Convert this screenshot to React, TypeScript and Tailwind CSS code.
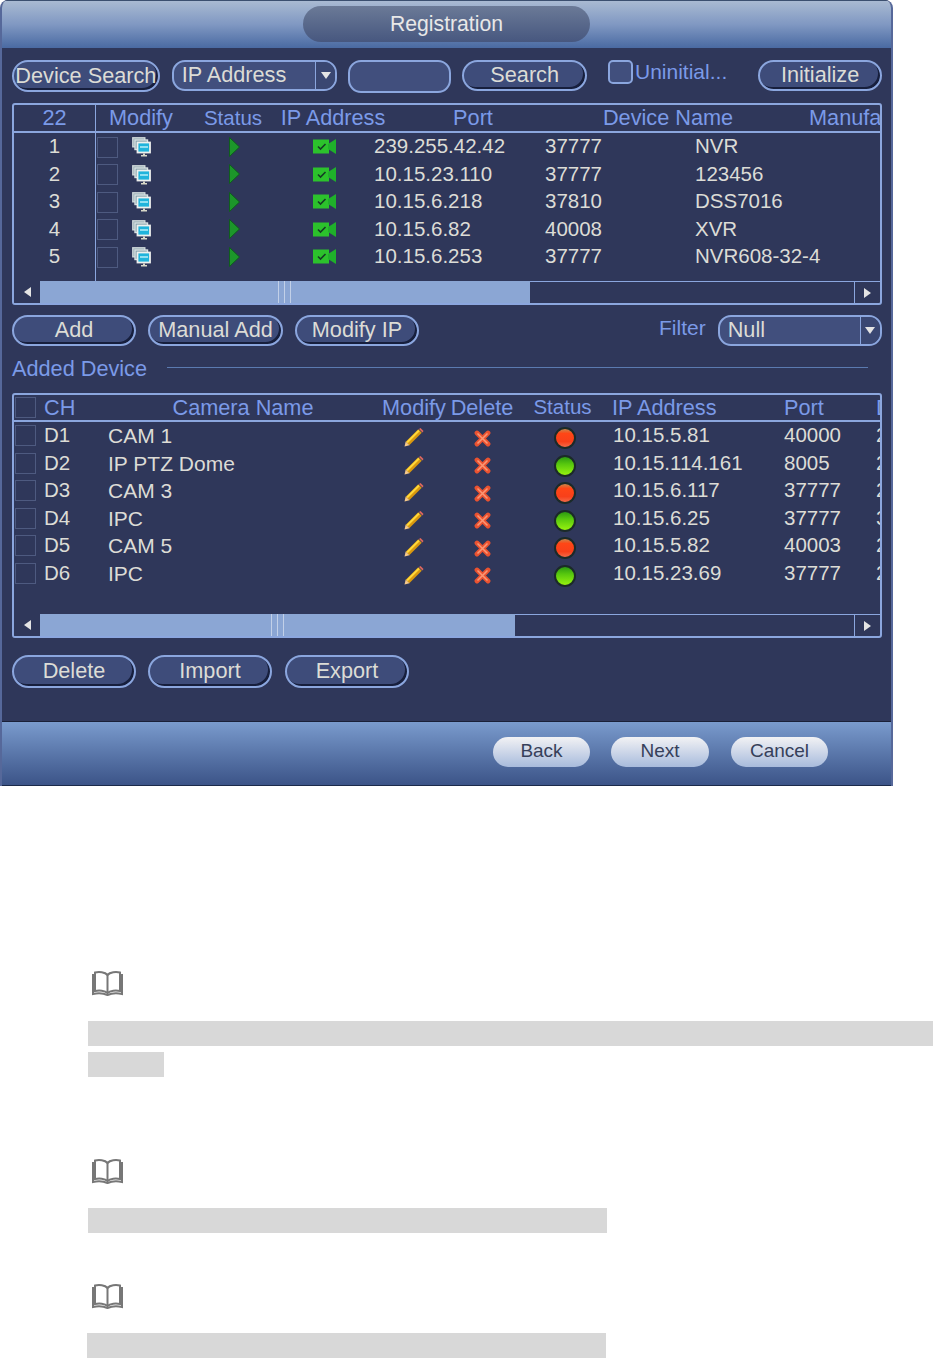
import React from 'react'

const found = [
  { n: '1', ip: '239.255.42.42', port: '37777', name: 'NVR' },
  { n: '2', ip: '10.15.23.110', port: '37777', name: '123456' },
  { n: '3', ip: '10.15.6.218', port: '37810', name: 'DSS7016' },
  { n: '4', ip: '10.15.6.82', port: '40008', name: 'XVR' },
  { n: '5', ip: '10.15.6.253', port: '37777', name: 'NVR608-32-4' },
]

const added = [
  { ch: 'D1', name: 'CAM 1', on: false, ip: '10.15.5.81', port: '40000', last: '2' },
  { ch: 'D2', name: 'IP PTZ Dome', on: true, ip: '10.15.114.161', port: '8005', last: '2' },
  { ch: 'D3', name: 'CAM 3', on: false, ip: '10.15.6.117', port: '37777', last: '2' },
  { ch: 'D4', name: 'IPC', on: true, ip: '10.15.6.25', port: '37777', last: '3' },
  { ch: 'D5', name: 'CAM 5', on: false, ip: '10.15.5.82', port: '40003', last: '2' },
  { ch: 'D6', name: 'IPC', on: true, ip: '10.15.23.69', port: '37777', last: '2' },
]

function Btn({ label, className }: { label: string; className: string }) {
  return (
    <div
      className={`flex items-center justify-center whitespace-nowrap rounded-full border-2 border-[#8ba6de] bg-[#3e4c7a] pb-[1px] text-[21.7px] leading-none text-[#dcdcd6] shadow-[inset_-2px_-2px_0_#171f3d] ${className}`}
    >
      {label}
    </div>
  )
}

function Caret() {
  return (
    <svg width="10" height="7" viewBox="0 0 10 7">
      <path d="M0 0h10L5 7z" fill="#e4e4e4" />
    </svg>
  )
}

function Select({ label, className }: { label: string; className: string }) {
  return (
    <div
      className={`flex items-center overflow-hidden rounded-[13px] border-2 border-[#8ba6de] bg-[#414f7d] text-[21.7px] leading-none text-[#dcdcd6] ${className}`}
    >
      <span className="flex-1 pb-[1px] pl-2">{label}</span>
      <span className="flex h-full w-[20px] items-center justify-center border-l border-[#8ba6de] bg-[#3a4772]">
        <Caret />
      </span>
    </div>
  )
}

function Check({ className = '' }: { className?: string }) {
  return <div className={`h-[21px] w-[21px] border border-[#4e5a80] ${className}`} />
}

function MonitorIcon() {
  return (
    <svg width="19" height="20" viewBox="0 0 19 20">
      <rect x="0.8" y="0.8" width="12" height="9" fill="#8fa6ae" stroke="#cfd8da" strokeWidth="1.400" />
      <rect x="3" y="3" width="12.500" height="9.500" fill="#7d9aa6" stroke="#d8e0e2" strokeWidth="1.400" />
      <rect x="5.500" y="5.500" width="12.500" height="10" fill="#20b4dc" stroke="#eef0ee" strokeWidth="1.800" />
      <rect x="8" y="9" width="8" height="2" fill="#8fe0f2" />
      <path d="M11 16.500h2v1.500h2v1.500h-6V18h2z" fill="#d8d8c8" />
    </svg>
  )
}

function PlayIcon() {
  return (
    <svg width="11" height="20" viewBox="0 0 11 20">
      <path d="M0.5 0.5L10.5 10L0.5 19.5z" fill="#1c962a" stroke="#0e5f1c" strokeWidth="1" />
    </svg>
  )
}

function CameraIcon() {
  return (
    <svg width="23" height="15" viewBox="0 0 23 15">
      <path d="M0 0.500h16v14H0z" fill="#2cc22c" />
      <path d="M15 5L23 0v15l-8-5z" fill="#1fb02a" />
      <path d="M5 7.500l2.500 2.500 5-5" fill="none" stroke="#143d24" strokeWidth="1.600" />
    </svg>
  )
}

function PencilIcon() {
  return (
    <svg width="20" height="20" viewBox="0 0 20 20">
      <path d="M3.500 16.500L16 4" stroke="#d9980f" strokeWidth="5" />
      <path d="M3 15.500L15 3.500" stroke="#ffd83a" strokeWidth="2" />
      <path d="M15 2l3.500 3.500 1-1.500L16.500 1z" fill="#e0685e" />
      <path d="M0.500 19.500l1.200-5 3.800 3.800z" fill="#f6c98a" />
    </svg>
  )
}

function CrossIcon() {
  return (
    <svg width="17" height="17" viewBox="0 0 17 17">
      <path d="M3 3l11 11M14 3L3 14" stroke="#ea5230" strokeWidth="4.800" strokeLinecap="round" />
      <path d="M3.500 3.500l10 10M13.500 3.500l-10 10" stroke="#fa9674" strokeWidth="1.600" />
    </svg>
  )
}

function Led({ on }: { on: boolean }) {
  return (
    <div
      className={`h-[22px] w-[22px] rounded-full border-2 border-[#1b2a28] ${
        on
          ? 'bg-[linear-gradient(to_bottom,#2c9a12,#58c80e_40%,#96f20f)]'
          : 'bg-[linear-gradient(to_bottom,#c8864a,#ff4616_25%,#f8401a_70%,#f46a48)]'
      }`}
    />
  )
}

function ScrollBar({ thumb, grip }: { thumb: string; grip: string }) {
  return (
    <div className="flex h-[22px] shrink-0">
      <div className="flex w-[26px] items-center justify-center bg-[#2f375a]">
        <svg width="7" height="10" viewBox="0 0 7 10">
          <path d="M7 0v10L0 5z" fill="#e4e4e4" />
        </svg>
      </div>
      <div className={`flex justify-start bg-[#8ba6d4] ${thumb}`}>
        <div className={`flex h-full gap-[5px] ${grip}`}>
          <span className="h-full w-px bg-[#c2d0e8]" />
          <span className="h-full w-px bg-[#c2d0e8]" />
          <span className="h-full w-px bg-[#c2d0e8]" />
        </div>
      </div>
      <div className="flex-1 border-t border-[#8ba6de]" />
      <div className="flex w-[26px] items-center justify-center border-l border-t border-[#8ba6de]">
        <svg width="7" height="10" viewBox="0 0 7 10">
          <path d="M0 0v10l7-5z" fill="#e4e4e4" />
        </svg>
      </div>
    </div>
  )
}

function BookIcon() {
  return (
    <svg width="33" height="27" viewBox="0 0 33 27" fill="none" stroke="#777" strokeWidth="2">
      <path d="M16.500 5C14 2 8 1.500 4 2.500V21c4-1 10-.5 12.500 2C19 20.500 25 20 29 21V2.500C25 1.500 19 2 16.500 5z" fill="#fff" />
      <path d="M16.500 5v18" />
      <path d="M4 5H2v19c5-1 11-.5 14.500 1C20 23.500 26 23 31 24V5h-2" />
    </svg>
  )
}

function Note({ lines }: { lines: string[] }) {
  return (
    <div className="flex flex-col gap-[6px]">
      {lines.map((w, i) => (
        <div key={i} className={`h-[25px] bg-[#d8d8d8] ${w}`} />
      ))}
    </div>
  )
}

function FooterBtn({ label, className }: { label: string; className: string }) {
  return (
    <div
      className={`flex h-[30px] items-center justify-center rounded-full bg-linear-to-b from-[#f2f2f4] to-[#a8bbdc] pb-[4px] text-[19px] leading-none text-[#36405a] ${className}`}
    >
      {label}
    </div>
  )
}

export default function App() {
  return (
    <div className="flex h-[1358px] w-[933px] flex-col overflow-hidden bg-white font-['Liberation_Sans',Arial,sans-serif]">
      <div className="flex h-[786px] w-[893px] shrink-0 flex-col overflow-hidden rounded-t-[8px] border-x-2 border-[#56689a] bg-[#2f375a]">
        {/* title */}
        <div className="flex h-[48px] shrink-0 items-start justify-center border-t border-[#3b4f6f] bg-linear-to-b from-[#a9bad2] via-[#8098c2] to-[#4a6aa2] pt-[5px]">
          <div className="flex h-[36px] w-[287px] items-center justify-center rounded-full bg-linear-to-b from-[#6b7a97] to-[#47577f] pb-[1px] text-[21.2px] leading-none text-[#e8e8e8]">
            Registration
          </div>
        </div>

        <div className="flex flex-1 flex-col pl-[10px] pr-[9px] pt-[12px]">
          {/* search row */}
          <div className="flex h-[31px] items-start">
            <Btn label="Device Search" className="h-[32px] w-[148px]" />
            <Select label="IP Address" className="ml-[12px] h-[31px] w-[166px]" />
            <div className="ml-[11px] h-[33px] w-[103px] rounded-[13px] border-2 border-[#8ba6de] bg-[#414f7d]" />
            <Btn label="Search" className="ml-[11px] h-[31px] w-[125px]" />
            <div className="ml-[21px] h-[24px] w-[25px] rounded-[5px] border-2 border-[#8ba6de] bg-[#414f7d]" />
            <span className="ml-[2px] h-[24px] text-[21px] leading-[24px] text-[#7b9ae8]">Uninitial...</span>
            <Btn label="Initialize" className="ml-[31px] h-[31px] w-[124px]" />
          </div>

          {/* search results */}
          <div className="relative mt-[12px] flex h-[202px] w-[870px] flex-col overflow-hidden rounded-[3px] border-2 border-[#8ba6de]">
            <div className="absolute bottom-[22px] left-[81px] top-0 w-px bg-[#8ba6de]" />
            <div className="grid h-[28px] shrink-0 grid-cols-[81px_92px_92px_108px_172px_218px_1fr] items-center whitespace-nowrap border-b-2 border-[#8ba6de] text-center text-[21.7px] leading-none text-[#7b9ae8]">
              <span>22</span>
              <span>Modify</span>
              <span className="text-[20.5px]">Status</span>
              <span>IP Address</span>
              <span>Port</span>
              <span>Device Name</span>
              <span className="pl-[32px] text-left">Manufa</span>
            </div>
            <div className="flex-1 pt-[0.5px]">
              {found.map(r => (
                <div
                  key={r.n}
                  className="grid h-[27.5px] grid-cols-[81px_91px_92px_92px_175px_150px_1fr] items-center pb-[2px] text-[20.5px] leading-none text-[#dcdcd6]"
                >
                  <span className="text-center">{r.n}</span>
                  <div className="flex items-center pl-[2px]">
                    <Check className="mt-[2px]" />
                    <div className="ml-[14px] mt-[2px] flex">
                      <MonitorIcon />
                    </div>
                  </div>
                  <div className="mt-[1px] flex justify-center pl-[4px]">
                    <PlayIcon />
                  </div>
                  <div className="mt-[1px] flex justify-center">
                    <CameraIcon />
                  </div>
                  <span className="pl-[4px]">{r.ip}</span>
                  <span>{r.port}</span>
                  <span>{r.name}</span>
                </div>
              ))}
            </div>
            <ScrollBar thumb="w-[490px]" grip="ml-[238px]" />
          </div>

          {/* actions */}
          <div className="mt-[10px] flex h-[31px] items-center">
            <Btn label="Add" className="h-[31px] w-[124px]" />
            <Btn label="Manual Add" className="ml-[12px] h-[31px] w-[135px]" />
            <Btn label="Modify IP" className="ml-[12px] h-[31px] w-[124px]" />
            <span className="ml-[240px] pb-[7px] text-[21px] leading-none text-[#7b9ae8]">Filter</span>
            <Select label="Null" className="ml-[12px] h-[31px] w-[164px]" />
          </div>

          {/* added device heading */}
          <div className="mt-[10px] flex h-[26px] items-center">
            <span className="text-[21.7px] leading-none text-[#7b9ae8]">Added Device</span>
            <div className="mb-[3px] ml-[20px] h-px w-[701px] bg-[#5b7ab0]" />
          </div>

          {/* added devices */}
          <div className="mt-[11px] flex h-[245px] w-[870px] flex-col overflow-hidden rounded-[3px] border-2 border-[#8ba6de]">
            <div className="grid h-[27px] shrink-0 grid-cols-[30px_64px_270px_70px_68px_97px_171px_92px_1fr] items-center whitespace-nowrap border-b-2 border-[#8ba6de] text-[21.7px] leading-none text-[#7b9ae8]">
              <Check className="ml-[1px]" />
              <span>CH</span>
              <span className="text-center">Camera Name</span>
              <span className="pl-[2px] text-center">Modify</span>
              <span className="text-center">Delete</span>
              <span className="pr-[4px] text-center text-[20.5px]">Status</span>
              <span className="-ml-px">IP Address</span>
              <span>Port</span>
              <span>D</span>
            </div>
            <div className="flex-1">
              {added.map(r => (
                <div
                  key={r.ch}
                  className="grid h-[27.5px] grid-cols-[30px_64px_270px_70px_68px_97px_171px_92px_1fr] items-center whitespace-nowrap pb-[2px] text-[20.5px] leading-none text-[#dcdcd6]"
                >
                  <Check className="ml-[1px]" />
                  <span>{r.ch}</span>
                  <span className="text-[21px]">{r.name}</span>
                  <div className="mt-[3px] flex justify-center pl-[2px]">
                    <PencilIcon />
                  </div>
                  <div className="mt-[5px] flex justify-center">
                    <CrossIcon />
                  </div>
                  <div className="mt-[5px] flex justify-center">
                    <Led on={r.on} />
                  </div>
                  <span>{r.ip}</span>
                  <span>{r.port}</span>
                  <span>{r.last}</span>
                </div>
              ))}
            </div>
            <ScrollBar thumb="w-[475px]" grip="ml-[231px]" />
          </div>

          {/* table actions */}
          <div className="mt-[17px] flex h-[33px]">
            <Btn label="Delete" className="h-[33px] w-[124px]" />
            <Btn label="Import" className="ml-[12px] h-[33px] w-[124px]" />
            <Btn label="Export" className="ml-[13px] h-[33px] w-[124px]" />
          </div>
        </div>

        {/* footer */}
        <div className="flex h-[65px] shrink-0 items-start gap-[21px] border-y border-b-[#1b2a4a] border-t-[#1a2038] bg-linear-to-b from-[#7a9bcd] to-[#3c5488] pl-[491px] pt-[15px]">
          <FooterBtn label="Back" className="w-[97px]" />
          <FooterBtn label="Next" className="w-[98px]" />
          <FooterBtn label="Cancel" className="ml-px w-[97px]" />
        </div>
      </div>

      {/* manual notes below the screenshot */}
      <div className="flex flex-col pl-[88px]">
        <div className="ml-[3px] mt-[184px] flex">
          <BookIcon />
        </div>
        <div className="mt-[24px]">
          <Note lines={['w-[845px]', 'w-[76px]']} />
        </div>
        <div className="ml-[3px] mt-[81px] flex">
          <BookIcon />
        </div>
        <div className="mt-[23px]">
          <Note lines={['w-[519px]']} />
        </div>
        <div className="ml-[3px] mt-[50px] flex">
          <BookIcon />
        </div>
        <div className="-ml-px mt-[23px]">
          <Note lines={['w-[519px]']} />
        </div>
      </div>
    </div>
  )
}
